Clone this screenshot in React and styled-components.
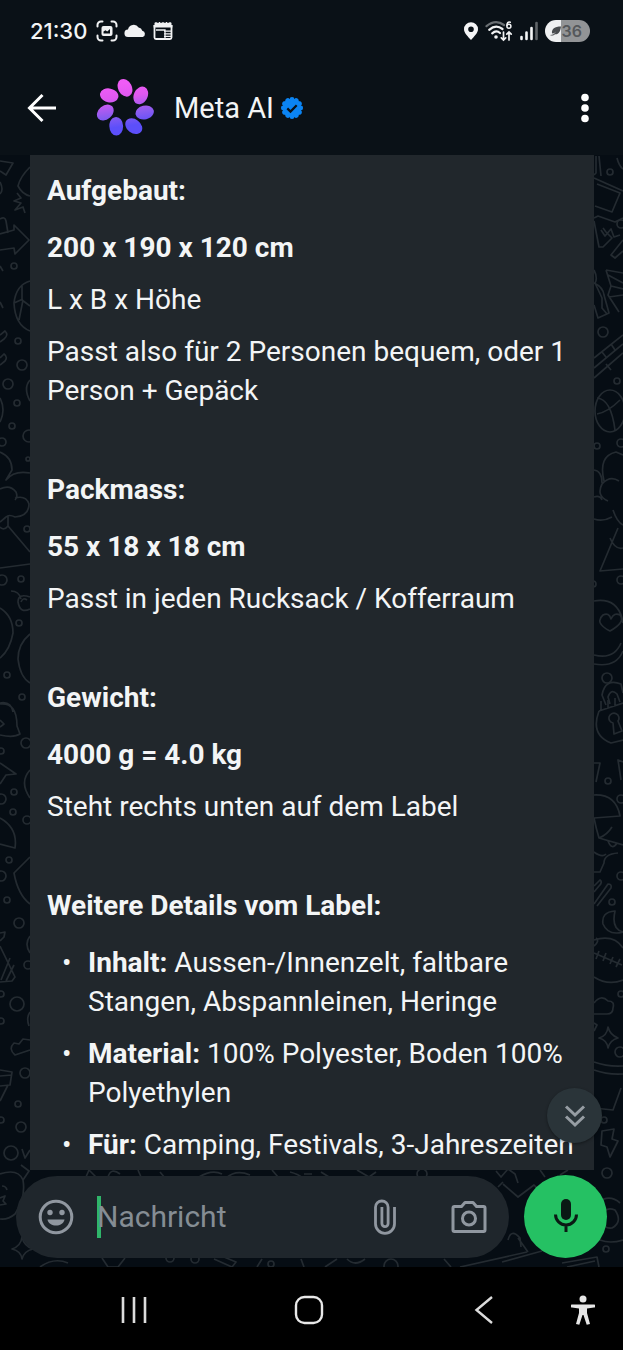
import React from 'react';
import styled, { createGlobalStyle } from 'styled-components';

const sections = [
    {
        title: 'Aufgebaut:',
        value: '200 x 190 x 120 cm',
        lines: ['L x B x Höhe', 'Passt also für 2 Personen bequem, oder 1 Person + Gepäck'],
    },
    {
        title: 'Packmass:',
        value: '55 x 18 x 18 cm',
        lines: ['Passt in jeden Rucksack / Kofferraum'],
    },
    {
        title: 'Gewicht:',
        value: '4000 g = 4.0 kg',
        lines: ['Steht rechts unten auf dem Label'],
    },
];

const details = [
    { label: 'Inhalt:', text: 'Aussen-/Innenzelt, faltbare Stangen, Abspannleinen, Heringe' },
    { label: 'Material:', text: '100% Polyester, Boden 100% Polyethylen' },
    { label: 'Für:', text: 'Camping, Festivals, 3-Jahreszeiten' },
];

const PETALS = [0, 1, 2, 3, 4, 5, 6];
const SCALLOPS = [0, 1, 2, 3, 4, 5, 6, 7, 8, 9, 10, 11];

// [cx, cy, r]
const leftDots = [
    [14, 266, 3], [18, 341, 3], [22, 365, 5], [8, 384, 5], [17, 403, 3], [12, 426, 3], [29, 436, 6],
    [2, 442, 4], [28, 459, 2], [27, 529, 3], [2, 580, 5], [21, 579, 3], [19, 623, 3], [7, 675, 3], [22, 697, 3],
    [26, 743, 5], [1, 751, 3], [14, 792, 3], [1, 799, 5], [13, 812, 3], [27, 820, 4], [9, 860, 3], [1, 876, 5],
    [7, 900, 3], [19, 923, 5], [28, 965, 4], [17, 1004, 7], [1, 994, 3], [1, 1021, 3], [25, 1073, 5],
    [18, 1104, 3], [21, 1127, 5], [11, 1153, 7], [1, 1120, 3], [170, 1258, 4], [195, 1259, 4], [271, 1264, 3],
];

const rightDots = [
    [610, 172, 3], [621, 224, 4], [603, 332, 5], [617, 381, 3], [597, 446, 3], [621, 443, 4], [593, 584, 3],
    [621, 580, 4], [607, 678, 5], [608, 781, 3], [621, 799, 4], [621, 876, 4], [612, 902, 3], [621, 994, 3],
    [620, 1052, 5], [604, 1120, 3], [607, 1173, 5], [606, 1249, 3], [391, 1266, 7], [422, 1174, 5],
];

const GlobalStyle = createGlobalStyle`
    * {
        box-sizing: border-box;
    }
    body {
        margin: 0;
        background: #000;
        font-family: Roboto, 'Liberation Sans', sans-serif;
    }
    button {
        display: flex;
        align-items: center;
        justify-content: center;
        padding: 0;
        border: none;
        background: none;
        color: inherit;
        cursor: pointer;
    }
    svg {
        display: block;
        flex: none;
    }
`;

function StatusIcons() {
    return (
        <>
            <svg width="22" height="22" viewBox="0 0 22 22" fill="none" stroke="#f1f2f3" strokeWidth="2" strokeLinecap="round">
                <path d="M1.5 6.500V5a3.500 3.500 0 0 1 3.500-3.500h1.500M15.500 1.500H17A3.500 3.500 0 0 1 20.500 5v1.500M20.500 15.500V17a3.500 3.500 0 0 1-3.500 3.500h-1.500M6.500 20.500H5A3.500 3.500 0 0 1 1.500 17v-1.500" />
                <rect x="5.500" y="6" width="11" height="10" rx="2" fill="#f1f2f3" stroke="none" />
                <path d="M7.500 13.500v-2l2-1.300 1.700 1.200 2.800-2.400v4.500z" fill="#0a1117" stroke="none" />
            </svg>
            <svg width="22" height="22" viewBox="0 0 22 22" fill="#f1f2f3">
                <path d="M4.300 17A3.700 3.700 0 0 1 4 9.600 5.800 5.800 0 0 1 14.600 7.600 4.300 4.300 0 0 1 18.300 10.800 3.200 3.200 0 0 1 18.700 17z" />
            </svg>
            <svg width="22" height="22" viewBox="0 0 22 22" fill="none" stroke="#f1f2f3" strokeWidth="1.800">
                <path d="M2.500 5v12.500a1.500 1.500 0 0 0 1.500 1.500h14a1.500 1.500 0 0 0 1.500-1.500V5" />
                <path d="M1.600 6.200h18.800M2.500 4h17" strokeWidth="2.400" />
                <path d="M4 2v3M7.500 2v3M11 2v3M14.500 2v3M18 2v3" strokeWidth="1.200" />
                <path d="M4 10h9v8M12 11.200h7M12 13.800h7M12 16.400h7" strokeWidth="1.300" />
            </svg>
        </>
    );
}

function ConnectionIcons() {
    return (
        <>
            <svg width="16" height="20" viewBox="0 0 16 20" fill="#f4f5f6">
                <path fillRule="evenodd" d="M8 1.200a7 7 0 0 1 7 7c0 4-4 7.200-7 10.800-3-3.600-7-6.800-7-10.800a7 7 0 0 1 7-7zm0 4.300a2.800 2.800 0 1 0 0 5.600 2.800 2.800 0 0 0 0-5.600z" />
            </svg>
            <svg width="28" height="22" viewBox="0 0 28 22" fill="none" stroke="#f1f2f3" strokeWidth="2.200" strokeLinecap="round">
                <path d="M1.500 6.200Q10.500-1.200 19 5" stroke="#6a6f73" />
                <path d="M4.200 9.800Q10.800 4 17.500 9" />
                <path d="M7.200 13.300q4-3.500 7.800-.3" />
                <circle cx="11" cy="17" r="1.800" fill="#f1f2f3" stroke="none" />
                <path d="M18.500 12v8M16.300 17.800l2.200 2.200 2.200-2.200M24 20v-8M21.800 14.200L24 12l2.200 2.200" strokeWidth="1.700" />
                <path d="M25.300 2.200c-2.200-.8-3.400.8-3.400 3.400" strokeWidth="1.500" />
                <circle cx="23.900" cy="6.200" r="2" strokeWidth="1.500" />
            </svg>
            <svg width="20" height="20" viewBox="0 0 20 20" strokeWidth="2.600" strokeLinecap="round" stroke="#f4f5f6">
                <path d="M2.500 16v2M7.500 11.500V18M12.500 7v11" />
                <path d="M17.500 2v16" stroke="#5f6468" />
            </svg>
        </>
    );
}

function MetaLogo() {
    return (
        <svg width="60" height="60" viewBox="0 0 60 60" role="img" aria-label="Meta AI">
            <defs>
                <linearGradient id="petalFill" x1="0.400" y1="0" x2="0.550" y2="1">
                    <stop offset="0.100" stopColor="#f05cf6" />
                    <stop offset="0.320" stopColor="#df58f0" />
                    <stop offset="0.600" stopColor="#8b5cf0" />
                    <stop offset="0.800" stopColor="#5c4ffa" />
                </linearGradient>
                <clipPath id="petals">
                    {PETALS.map((i) => (
                        <ellipse
                            key={i}
                            cx="30"
                            cy="9.800"
                            rx="6.900"
                            ry="9.300"
                            transform={`rotate(${i * 51.43} 30 30) rotate(-27 30 9.800)`}
                        />
                    ))}
                </clipPath>
            </defs>
            <rect width="60" height="60" fill="url(#petalFill)" clipPath="url(#petals)" />
        </svg>
    );
}

function VerifiedBadge() {
    return (
        <svg width="24" height="24" viewBox="0 0 24 24" fill="#0b84f3">
            <circle cx="12" cy="12" r="9.600" />
            {SCALLOPS.map((i) => (
                <circle key={i} cx="12" cy="3.300" r="2.400" transform={`rotate(${i * 30} 12 12)`} />
            ))}
            <path d="M7.300 12.400l3.200 3.200 6.200-6.400" fill="none" stroke="#0a1117" strokeWidth="2.200" />
        </svg>
    );
}

function Wallpaper() {
    return (
        <>
            <Doodles viewBox="0 155 312 1112" aria-hidden="true">
                {leftDots.map(([x, y, r]) => (
                    <circle key={`${x}-${y}`} cx={x} cy={y} r={r} />
                ))}
                <path d="M0 161l13 2-7 12-6-4M0 182q4 8 0 12M30 167q-10 10-12 19 4 8 12 10M17 193l4 5-7 3 7 2-6 7 8-3 2 6M0 219q5-3 6 2l2 12M0 234l14-4v-5l15 15-14 14-1-6-14 2M0 266l3 5M0 302l3 6" />
                <path d="M30 281q-14 4-16 22 1 22 16 28M22 286v14l8 6M14 303l9-4M23 300l-4 20M0 335l5-4q4 4-1 8l-4 3M0 358l4-4q4 3 1 7l-5 4M30 380q-7 8 0 21M0 398q6 12 0 24" />
                <path d="M0 452q12 5 12 18l-6 10q8-10 24-7M0 489q10-5 16 3 2 5-1 8M15 498q11-3 14 6 0 12-14 13-6-3-9 0L0 522M8 516v10l22 26M8 526q-4 5-8 1M0 568l30-4M11 591q8 0 10 8M30 597q-12-4-12 5 2 12 12 7M21 602q2-5 6-2" />
                <path d="M0 608q13 8 13 25-3 17-13 25M30 634q-12 10-12 25 2 18 12 24M0 703q11-2 13 9M0 704q17-2 17 22l3 8q-6 4-20 1M0 727l4-3-4-4M30 770q-11 12 0 28M0 763l16 11-10 1-6 9M0 818q18 10 15 30l-15-4M30 857l-16 16q4 22 16 31" />
                <path d="M0 933l5-1-1 5-4 4M0 946l15 31-3 4-12 1M10 958l-9 22M14 965l-8 16M30 936q-6 8 0 17M30 1012q-4 6-1 14M30 1040l-7-1-4 5-5-1q-6 6 1 12l15-5M0 1070l12 2-2 13-10 1M0 1076l12-1M8 1085l-8 16M30 1150l-5 8-3-9" />
                <path d="M0 1174q18-6 23 6 3 18-8 34-7 6-15 5M2 1186q4 0 5 4M0 1198l5-2-2 5 3 3-6 1M23 1180l6-9-8-6M22 1237q-1 9-10 12 9 2 10 10 2-8 11-10-9-3-11-12zM40 1267q14-10 28-4M102 1258l6 9h10l7-9" />
                <path d="M86 1177l3-7 7 7M108 1177q3-10 12-3M138 1170l3 7M160 1172l5 6M199 1177q13-8 23-3M226 1178q10-9 24-3M272 1170l6 7M290 1172q8 2 13 6M214 1259l18 8 4-5-12-5M262 1259l-5 8M301 1259l3 8M312 1174h-8" />
            </Doodles>
            <DoodlesRight viewBox="311 155 312 1112" aria-hidden="true">
                {rightDots.map(([x, y, r]) => (
                    <circle key={`${x}-${y}`} cx={x} cy={y} r={r} />
                ))}
                <path d="M596 156v17l-2 2M599 156l2 20M617 158q2 8 6 11M594 178l29 13M597 184l23 9-8 19-17-6M594 218l4-2 17 6 8-4M594 221l5 26h4l9-9-6-6-3-4M601 230l4 6 6-7 3 8 6-2M623 240l-12 15 4 3 8-7" />
                <path d="M594 270q4 8 1 13l7 15v10l5 6M594 283q9 4 10 12l5 18-11 5-4-13M606 270l5 16-3 9 11 17M606 270l17 3M608 275l15 8M611 286l12 3M609 297l14-2M594 358l29-23M594 368l29-24M594 378l29-25M611 344l4 6M602 352l4 5M606 364l5 6" />
                <ellipse cx="610" cy="411" rx="15" ry="21" />
                <path d="M597 398q14 1 18 32M597 414q11-2 23-14M594 470q8 1 8 13M604 481q-6-25 12-29l7 3M608 501q-12-5-6-17 8-9 17-3M594 519q9 3 18-2M594 497q6-2 8 3M613 510q4 12 10 15M618 528l-18 43 23-2M610 538q5 12 13 10" />
                <path d="M594 601q25-4 29 22M594 664q22 4 29-13M594 655q20 5 27-12M610 631q-16-8-7-16 6-3 8 4 3-7 9-4 6 7-10 16zM606 705l-4-10q3-17 19-11l2 9M610 704l-2-7q3-9 9-3l3 8" />
                <path d="M599 711l24-8M601 711v-10M608 709v-9M615 706v-8M599 711q-9 24 12 32l12-3M613 723a5 5 0 1 1 5-2l4 10-8 3zM594 763h6l-4 19M623 762l-5-2 3 20M594 795q22-1 26 21l-26 2M594 818q2 10 5 20l24 7M599 838q8-3 13-11M608 841q4 10 9 2M594 852q8 6 12 2M618 853q-14 1-14 10l-4 9h-6" />
                <path d="M594 886l6-6q3 2-1 6l-5 6M594 904l14-20q4 0 3 4l-14 18M615 911q-14 1-12 13 5 12 20 8-12-3-8-21zM594 940q20-6 29 8M594 977q14 9 29 3M594 953l28 12M599 951l-3 8M606 953l-3 8M613 957l-3 7M620 959l-4 8M594 946q6-5 2-8M594 1003q7-9 14-2 7 0 5 7 0 6-6 6h-13" />
                <path d="M594 1023l3 2-3 6M608 1027q-1 9-9 11 8 2 9 10 2-8 10-10-8-3-10-11zM594 1062q14 5 29 4M594 1070q14 5 29 4M594 1108l19 2 8-22M602 1131l-1 14 6 2 3 10 8-16-6-2 2-10z" />
                <path d="M496 1171l5 6 7-8 7 5 3 9M503 1184l15 13 16-12 6 6M498 1187l5-5M540 1170l5 7M560 1175l8-5M508 1240q3-12 12-2l1 9M518 1238l10 14M502 1262l40-11M460 1267l67-15M562 1263l35-6 2 10M567 1267l28-6M598 1202q12-8 22 1M603 1216q2-10 12-6 8 12-3 18-8 1-9-6M600 1240q10 4 23 0M325 1267l12-8M347 1259q8 8 18 0M444 1259l7 8M321 1172l8 5M357 1170l12 7 7-5" />
            </DoodlesRight>
        </>
    );
}

function App() {
    return (
        <>
            <GlobalStyle />
            <Screen>
                <StatusBar>
                    <StatusGroup>
                        <Clock>21:30</Clock>
                        <StatusIcons />
                    </StatusGroup>
                    <StatusGroup>
                        <ConnectionIcons />
                        <Battery>
                            <svg width="11" height="10" viewBox="0 0 11 10" fill="#484b4e">
                                <path d="M0 9q4 0 6-3.500Q4 8 2 7.300C1.500 3 4.500.5 11 .5 10.500 5 9 8.500 5 8.300 3.500 9.800 1.500 9.800 0 9z" />
                            </svg>
                            36
                        </Battery>
                    </StatusGroup>
                </StatusBar>

                <ChatHeader>
                    <HeaderButton aria-label="Zurück">
                        <svg width="30" height="30" viewBox="0 0 30 30" fill="none" stroke="#fff" strokeWidth="3">
                            <path d="M29 15H3M15.500 2L2.500 15l13 13" />
                        </svg>
                    </HeaderButton>
                    <MetaLogo />
                    <ChatTitle>Meta AI</ChatTitle>
                    <VerifiedBadge />
                    <MenuButton aria-label="Menü">
                        <svg width="10" height="30" viewBox="0 0 10 30" fill="#fff">
                            <circle cx="5" cy="4.500" r="3.800" />
                            <circle cx="5" cy="15" r="3.800" />
                            <circle cx="5" cy="25.500" r="3.800" />
                        </svg>
                    </MenuButton>
                </ChatHeader>

                <Chat>
                    <Wallpaper />
                    <Bubble>
                        {sections.map((item) => (
                            <Section key={item.title}>
                                <Heading>{item.title}</Heading>
                                <Paragraph $bold>{item.value}</Paragraph>
                                {item.lines.map((line) => (
                                    <Paragraph key={line}>{line}</Paragraph>
                                ))}
                            </Section>
                        ))}
                        <Heading>Weitere Details vom Label:</Heading>
                        <DetailList>
                            {details.map((item) => (
                                <DetailItem key={item.label}>
                                    <b>{item.label}</b> {item.text}
                                </DetailItem>
                            ))}
                        </DetailList>
                        <ScrollButton aria-label="Nach unten">
                            <svg width="22" height="24" viewBox="0 0 22 24" fill="none" stroke="#969da3" strokeWidth="3">
                                <path d="M2 2.500l9 8.500 9-8.500M2 12.500l9 8.500 9-8.500" />
                            </svg>
                        </ScrollButton>
                    </Bubble>

                    <Composer>
                        <InputPill>
                            <button aria-label="Emoji">
                                <svg width="36" height="36" viewBox="0 0 36 36" fill="#9097a0">
                                    <circle cx="18" cy="18" r="15.800" fill="none" stroke="#9097a0" strokeWidth="3" />
                                    <circle cx="12" cy="13.500" r="2.700" />
                                    <circle cx="24" cy="13.500" r="2.700" />
                                    <path d="M9.500 20.500h17c-1.500 8-15.500 8-17 0z" />
                                </svg>
                            </button>
                            <Caret />
                            <MessageInput type="text" placeholder="Nachricht" aria-label="Nachricht" />
                            <button aria-label="Anhang">
                                <svg width="24" height="36" viewBox="0 0 24 36" fill="none" stroke="#9097a0" strokeWidth="2.800">
                                    <path d="M21.500 8v16.800a9.500 9.500 0 0 1-19 0V8.300a6.300 6.300 0 0 1 12.600 0v16.200a3.100 3.100 0 0 1-6.200 0V8" />
                                </svg>
                            </button>
                            <button aria-label="Kamera">
                                <svg width="36" height="34" viewBox="0 0 36 34" fill="none" stroke="#9097a0" strokeWidth="3" strokeLinejoin="round">
                                    <path d="M3.500 6.500h7L14 2.500h8l3.500 4h7a1.500 1.500 0 0 1 1.500 1.500v22a1.500 1.500 0 0 1-1.500 1.500h-29A1.500 1.500 0 0 1 2 30V8a1.500 1.500 0 0 1 1.500-1.500z" />
                                    <circle cx="18" cy="18.500" r="6.500" />
                                </svg>
                            </button>
                        </InputPill>
                        <MicButton aria-label="Sprachnachricht">
                            <svg width="26" height="38" viewBox="0 0 26 38" fill="none" stroke="#0a1a14" strokeWidth="3">
                                <rect x="8" y="1" width="10" height="21" rx="5" fill="#0a1a14" stroke="none" />
                                <path d="M2.500 16.500a10.500 10.500 0 0 0 21 0M13 27v7" />
                            </svg>
                        </MicButton>
                    </Composer>
                </Chat>

                <NavBar>
                    <NavButton aria-label="Letzte Apps">
                        <svg width="28" height="28" viewBox="0 0 28 28" stroke="#dcdcdc" strokeWidth="2.600">
                            <path d="M3 1v26M14 1v26M25 1v26" />
                        </svg>
                    </NavButton>
                    <NavButton aria-label="Startbildschirm">
                        <svg width="30" height="30" viewBox="0 0 30 30" fill="none" stroke="#e8e8e8" strokeWidth="2.400">
                            <rect x="2" y="2" width="26" height="26" rx="8.500" />
                        </svg>
                    </NavButton>
                    <NavButton aria-label="Zurück">
                        <svg width="20" height="28" viewBox="0 0 20 28" fill="none" stroke="#dcdcdc" strokeWidth="2.400">
                            <path d="M18 1L2.500 14 18 27" />
                        </svg>
                    </NavButton>
                    <button aria-label="Bedienungshilfen">
                        <svg width="24" height="30" viewBox="0 0 24 30" fill="#e6e6e6">
                            <circle cx="12" cy="4" r="3.500" />
                            <path d="M1 9.500h22a1 1 0 0 1 0 3l-7 1v4.500l3 11-3.300.8L12.500 20h-1L8.300 29.800 5 29l3-11v-4.500l-7-1a1 1 0 0 1 0-3z" />
                        </svg>
                    </button>
                </NavBar>
            </Screen>
        </>
    );
}

const Screen = styled.div`
    display: flex;
    flex-direction: column;
    min-height: 100vh;
    background: #0a1117;
    color: #f3f5f6;
`;

// StatusBar
const StatusBar = styled.div`
    display: flex;
    justify-content: space-between;
    align-items: center;
    height: 62px;
    padding: 0 33px 0 30px;
`;
const StatusGroup = styled.div`
    display: flex;
    align-items: center;
    gap: 6px;
`;
const Clock = styled.div`
    margin-right: 3px;
    font-family: Inter, sans-serif;
    font-size: 22px;
    font-weight: 500;
`;
const Battery = styled.div`
    display: flex;
    align-items: center;
    justify-content: space-between;
    width: 45px;
    height: 22px;
    padding: 0 8px 0 5px;
    border-radius: 11px;
    background: linear-gradient(90deg, #eff0f1 36%, #929496 36%);
    color: #55585b;
    font-family: Inter, sans-serif;
    font-size: 16px;
    font-weight: 600;
`;

// ChatHeader
const ChatHeader = styled.header`
    display: flex;
    align-items: center;
    height: 93px;
    padding: 0 24px 2px;
`;
const HeaderButton = styled.button`
    width: 36px;
    height: 48px;
    margin-right: 35px;
`;
const ChatTitle = styled.h1`
    margin: 0 6px 0 19px;
    font-size: 29px;
    font-weight: 400;
`;
const MenuButton = styled.button`
    width: 28px;
    height: 48px;
    margin-left: auto;
`;

// Chat
const Chat = styled.main`
    position: relative;
    display: flex;
    flex-direction: column;
    flex: 1;
    overflow: hidden;
    background: #060d14;
`;
const Doodles = styled.svg`
    position: absolute;
    top: 0;
    left: 0;
    width: 312px;
    height: 1112px;
    fill: none;
    stroke: #242b31;
    stroke-width: 1.7;
    stroke-linejoin: round;
`;
const DoodlesRight = styled(Doodles)`
    left: auto;
    right: 0;
`;
const Bubble = styled.article`
    position: relative;
    margin: 0 29px 0 30px;
    padding: 16px 16px 6px 17px;
    background: #21272c;
    font-size: 28px;
    line-height: 39px;
`;
const Section = styled.section`
    margin-bottom: 60px;
`;
const Heading = styled.h2`
    margin: 0 0 18px;
    font-size: 28px;
    font-weight: 700;
`;
const Paragraph = styled.p`
    margin: 0;
    font-weight: ${({ $bold }) => ($bold ? 700 : 400)};

    & + & {
        margin-top: 13px;
    }
`;
const DetailList = styled.ul`
    display: flex;
    flex-direction: column;
    gap: 13px;
    margin: 0;
    padding: 0;
    list-style: none;
`;
const DetailItem = styled.li`
    padding-left: 41px;

    &::before {
        content: '•';
        float: left;
        width: 26px;
        margin-left: -26px;
    }
`;
const ScrollButton = styled.button`
    position: absolute;
    right: -8px;
    bottom: 27px;
    width: 55px;
    height: 55px;
    border-radius: 50%;
    background: #2a3439;
    box-shadow: 0 1px 3px rgba(0, 0, 0, 0.4);
`;

// Composer
const Composer = styled.div`
    position: relative;
    display: flex;
    align-items: center;
    gap: 15px;
    margin-top: auto;
    padding: 5px 16px 9px;
`;
const InputPill = styled.div`
    display: flex;
    align-items: center;
    flex: 1;
    min-width: 0;
    height: 82px;
    padding: 0 22px;
    border-radius: 41px;
    background: #1f262c;
`;
const Caret = styled.span`
    width: 4px;
    height: 42px;
    margin: 0 -4px 0 23px;
    background: #2fb56a;
`;
const MessageInput = styled.input`
    flex: 1;
    min-width: 0;
    padding: 0;
    border: none;
    outline: none;
    background: none;
    color: #f3f5f6;
    caret-color: #2fb56a;
    font-family: inherit;
    font-size: 30px;

    &::placeholder {
        color: #858d94;
        opacity: 1;
    }

    & + button {
        margin: 0 54px 0 12px;
    }
`;
const MicButton = styled.button`
    flex: none;
    width: 83px;
    height: 83px;
    border-radius: 50%;
    background: #25c163;
`;

// NavBar
const NavBar = styled.nav`
    display: flex;
    align-items: center;
    height: 83px;
    padding: 2px 28px 0 47px;
    background: #000;
`;
const NavButton = styled.button`
    flex: 1;
    height: 48px;
`;

export default App;
